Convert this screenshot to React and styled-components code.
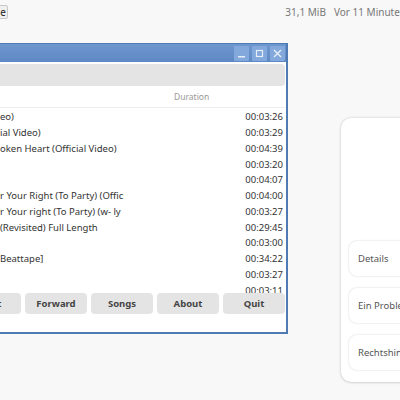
import styled, { createGlobalStyle } from 'styled-components';

const Global = createGlobalStyle`
    html, body {
        margin: 0;
        padding: 0;
        background: #f8f8f8;
        font-family: "Noto Sans", "Open Sans", sans-serif;
    }
    #root {
        width: 400px;
        height: 400px;
        overflow: hidden;
    }
`
const Page = styled.div`
    width: 400px;
    height: 400px;
    overflow: hidden;
    display: flex;
    flex-direction: column;
`
const TopBar = styled.div`
    height: 24px;
    display: flex;
    align-items: center;
    justify-content: space-between;
    font-size: 10px;
    color: #777;
`
const TinyButton = styled.div`
    margin-left: -13px;
    width: 21px;
    height: 14px;
    border: 1px solid #c8c8c8;
    border-radius: 2px;
    background: #f0f0f0;
    color: #222;
    display: flex;
    align-items: center;
    justify-content: flex-end;
    padding-right: 1px;
    box-sizing: border-box;
`
const Meta = styled.div`
    display: flex;
    gap: 8px;
    white-space: nowrap;
    margin-right: -6px;
`
const Main = styled.div`
    display: flex;
    align-items: flex-start;
    margin-top: 19px;
`
const Window = styled.div`
    width: 300px;
    margin-left: -12px;
    height: 291px;
    border: 2px solid #4f7ab3;
    border-top: 1px solid #4f7ab3;
    background: #fff;
    display: flex;
    flex-direction: column;
    box-sizing: border-box;
    color: #333;
    font-size: 9.5px;
`
const TitleBar = styled.div`
    height: 18px;
    background: linear-gradient(#6f97cf, #5d89c4);
    display: flex;
    align-items: center;
    justify-content: flex-end;
    gap: 3px;
    padding-right: 1px;
`
const WinButton = styled.div`
    width: 15px;
    height: 15px;
    background: #82a8dc;
    border-radius: 1px;
    display: flex;
    align-items: center;
    justify-content: center;
`
const Band = styled.div`
    height: 22px;
    margin: 2px 1px 0 0;
    background: #e4e4e4;
    border-radius: 0 4px 4px 0;
`
const Header = styled.div`
    height: 21px;
    display: flex;
    align-items: center;
    border-bottom: 1px solid #eee;
    color: #999;
    font-size: 8.5px;
`
const List = styled.div`
    height: 184px;
    overflow: hidden;
    padding-top: 1px;
`
const Row = styled.div`
    height: 15.75px;
    display: flex;
    align-items: center;
    white-space: nowrap;
`
const Title = styled.div`
    width: 134px;
    padding-left: 10px;
    box-sizing: border-box;
    overflow: hidden;
`
const Gap = styled.div`
    width: 46px;
`
const Duration = styled.div`
    flex: 1;
    text-align: ${p => p.head ? 'left' : 'right'};
    padding: ${p => p.head ? '0 0 0 4px' : '0 3px 0 0'};
`
const Buttons = styled.div`
    display: flex;
    gap: 4px;
    margin-left: -31px;
`
const Btn = styled.div`
    width: 62px;
    height: 21px;
    flex-shrink: 0;
    background: #e4e4e4;
    border-radius: 4px;
    font-weight: bold;
    color: #444;
    display: flex;
    align-items: center;
    justify-content: center;
`
const Card = styled.div`
    margin-top: 75px;
    margin-left: auto;
    margin-right: -60px;
    width: 119px;
    height: 264px;
    background: #fff;
    border-radius: 10px;
    box-shadow: 0 0 3px rgba(0,0,0,0.18), 0 1px 2px rgba(0,0,0,0.08);
    display: flex;
    flex-direction: column;
    justify-content: flex-end;
    gap: 12px;
    padding: 0 0 12px 8px;
    box-sizing: border-box;
`
const Item = styled.div`
    height: 35px;
    border-radius: 8px;
    background: #fff;
    box-shadow: 0 0 2px rgba(0,0,0,0.2);
    display: flex;
    align-items: center;
    padding-left: 9px;
    font-size: 9.5px;
    color: #555;
    white-space: nowrap;
`

const songs = [
    ['eo)', '00:03:26'],
    ['ial Video)', '00:03:29'],
    ['oken Heart (Official Video)', '00:04:39'],
    ['', '00:03:20'],
    ['', '00:04:07'],
    ['r Your Right (To Party) (Official Video)', '00:04:00'],
    ['r Your right (To Party) (w- ly', '00:03:27'],
    [' (Revisited) Full Length', '00:29:45'],
    ['', '00:03:00'],
    ['Beattape]', '00:34:22'],
    ['', '00:03:27'],
    ['', '00:03:11'],
]

const App = () => {
    return (
        <Page>
            <Global />
            <TopBar>
                <TinyButton>e</TinyButton>
                <Meta>
                    <span>31,1 MiB</span>
                    <span>Vor 11 Minuten</span>
                </Meta>
            </TopBar>
            <Main>
                <Window>
                    <TitleBar>
                        <WinButton>
                            <svg width="9" height="9" viewBox="0 0 9 9"><rect x="1" y="7" width="7" height="1.5" fill="#fff" opacity="0.8" /></svg>
                        </WinButton>
                        <WinButton>
                            <svg width="9" height="9" viewBox="0 0 9 9"><rect x="1.5" y="1.5" width="6" height="6" fill="none" stroke="#fff" strokeWidth="1.2" opacity="0.8" /></svg>
                        </WinButton>
                        <WinButton>
                            <svg width="9" height="9" viewBox="0 0 9 9"><path d="M1 1 L8 8 M8 1 L1 8" stroke="#fff" strokeWidth="1.3" opacity="0.85" /></svg>
                        </WinButton>
                    </TitleBar>
                    <Band />
                    <Header>
                        <Title />
                        <Gap />
                        <Duration head>Duration</Duration>
                    </Header>
                    <List>
                        {songs.map(([t, d], i) => (
                            <Row key={i}>
                                <Title>{t}</Title>
                                <Gap />
                                <Duration>{d}</Duration>
                            </Row>
                        ))}
                    </List>
                    <Buttons>
                        <Btn>Next</Btn>
                        <Btn>Forward</Btn>
                        <Btn>Songs</Btn>
                        <Btn>About</Btn>
                        <Btn>Quit</Btn>
                    </Buttons>
                </Window>
                <Card>
                    <Item>Details</Item>
                    <Item>Ein Problem melden</Item>
                    <Item>Rechtshinweise</Item>
                </Card>
            </Main>
        </Page>
    )
}

export default App;
